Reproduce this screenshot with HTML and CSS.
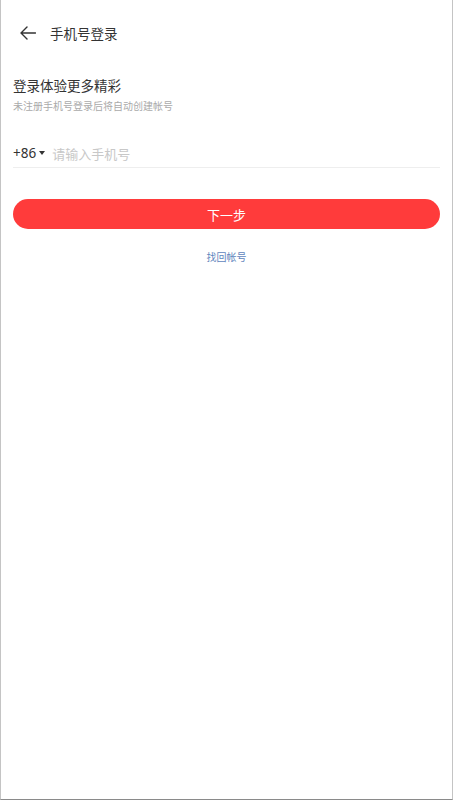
FILE: index.html
```html
<!DOCTYPE html>
<html lang="zh">
<head>
<meta charset="utf-8">
<title>手机号登录</title>
<link rel="stylesheet" href="styles.css">
</head>
<body>
<div class="frame">
  <header class="nav">
    <svg class="back" width="16" height="14" viewBox="0 0 16 14" aria-hidden="true">
      <path d="M15.5 7H1.2M7 1L1 7l6 6" fill="none" stroke="#333" stroke-width="1.4" stroke-linecap="round" stroke-linejoin="round"/>
    </svg>
    <span class="nav-title">手机号登录</span>
  </header>
  <main class="content">
    <h1 class="heading">登录体验更多精彩</h1>
    <p class="sub">未注册手机号登录后将自动创建帐号</p>
    <div class="phone-row">
      <span class="code">+86</span>
      <span class="caret"></span>
      <span class="placeholder">请输入手机号</span>
    </div>
    <button class="next">下一步</button>
    <div class="recover"><span>找回帐号</span></div>
  </main>
</div>
</body>
</html>
```
FILE: styles.css
```css
html, body {
  margin: 0;
  padding: 0;
  height: 100%;
  background: #fff;
}
body {
  font-family: "Noto Sans CJK SC", "Noto Sans", sans-serif;
  color: #333;
}
.frame {
  box-sizing: border-box;
  height: 800px;
  width: 453px;
  border-left: 1px solid #c4c4c4;
  border-right: 1px solid #c4c4c4;
  border-bottom: 1px solid #8a8a8a;
  background: #fff;
}
.nav {
  display: flex;
  align-items: center;
  height: 66px;
  padding-left: 19px;
  box-sizing: border-box;
}
.back {
  display: block;
  margin-right: 14px;
}
.nav-title {
  font-size: 13.5px;
  color: #333;
}
.content {
  padding: 8px 12px 0 12px;
}
.heading {
  margin: 0;
  font-size: 13.5px;
  font-weight: normal;
  line-height: 22px;
  color: #333;
}
.sub {
  margin: 3px 0 0 0;
  font-size: 10px;
  line-height: 14px;
  color: #aaa;
}
.phone-row {
  display: flex;
  align-items: center;
  margin-top: 28px;
  height: 24px;
  border-bottom: 1px solid #eee;
  padding-bottom: 2px;
}
.code {
  font-family: "Noto Sans", sans-serif;
  font-size: 13.5px;
  color: #333;
}
.caret {
  width: 0;
  height: 0;
  border-left: 3.5px solid transparent;
  border-right: 3.5px solid transparent;
  border-top: 4px solid #333;
  margin: 0 7px 0 3px;
}
.placeholder {
  font-size: 13px;
  color: #c8c8c8;
}
.next {
  display: block;
  width: 100%;
  height: 30px;
  margin-top: 31px;
  border: none;
  border-radius: 15px;
  background: #ff3b3b;
  color: #fff;
  font-family: "Noto Sans CJK SC", sans-serif;
  font-size: 13px;
  padding: 0;
}
.recover {
  display: flex;
  justify-content: center;
  margin-top: 21px;
  font-size: 10px;
  line-height: 14px;
  color: #5f86bd;
}
```
